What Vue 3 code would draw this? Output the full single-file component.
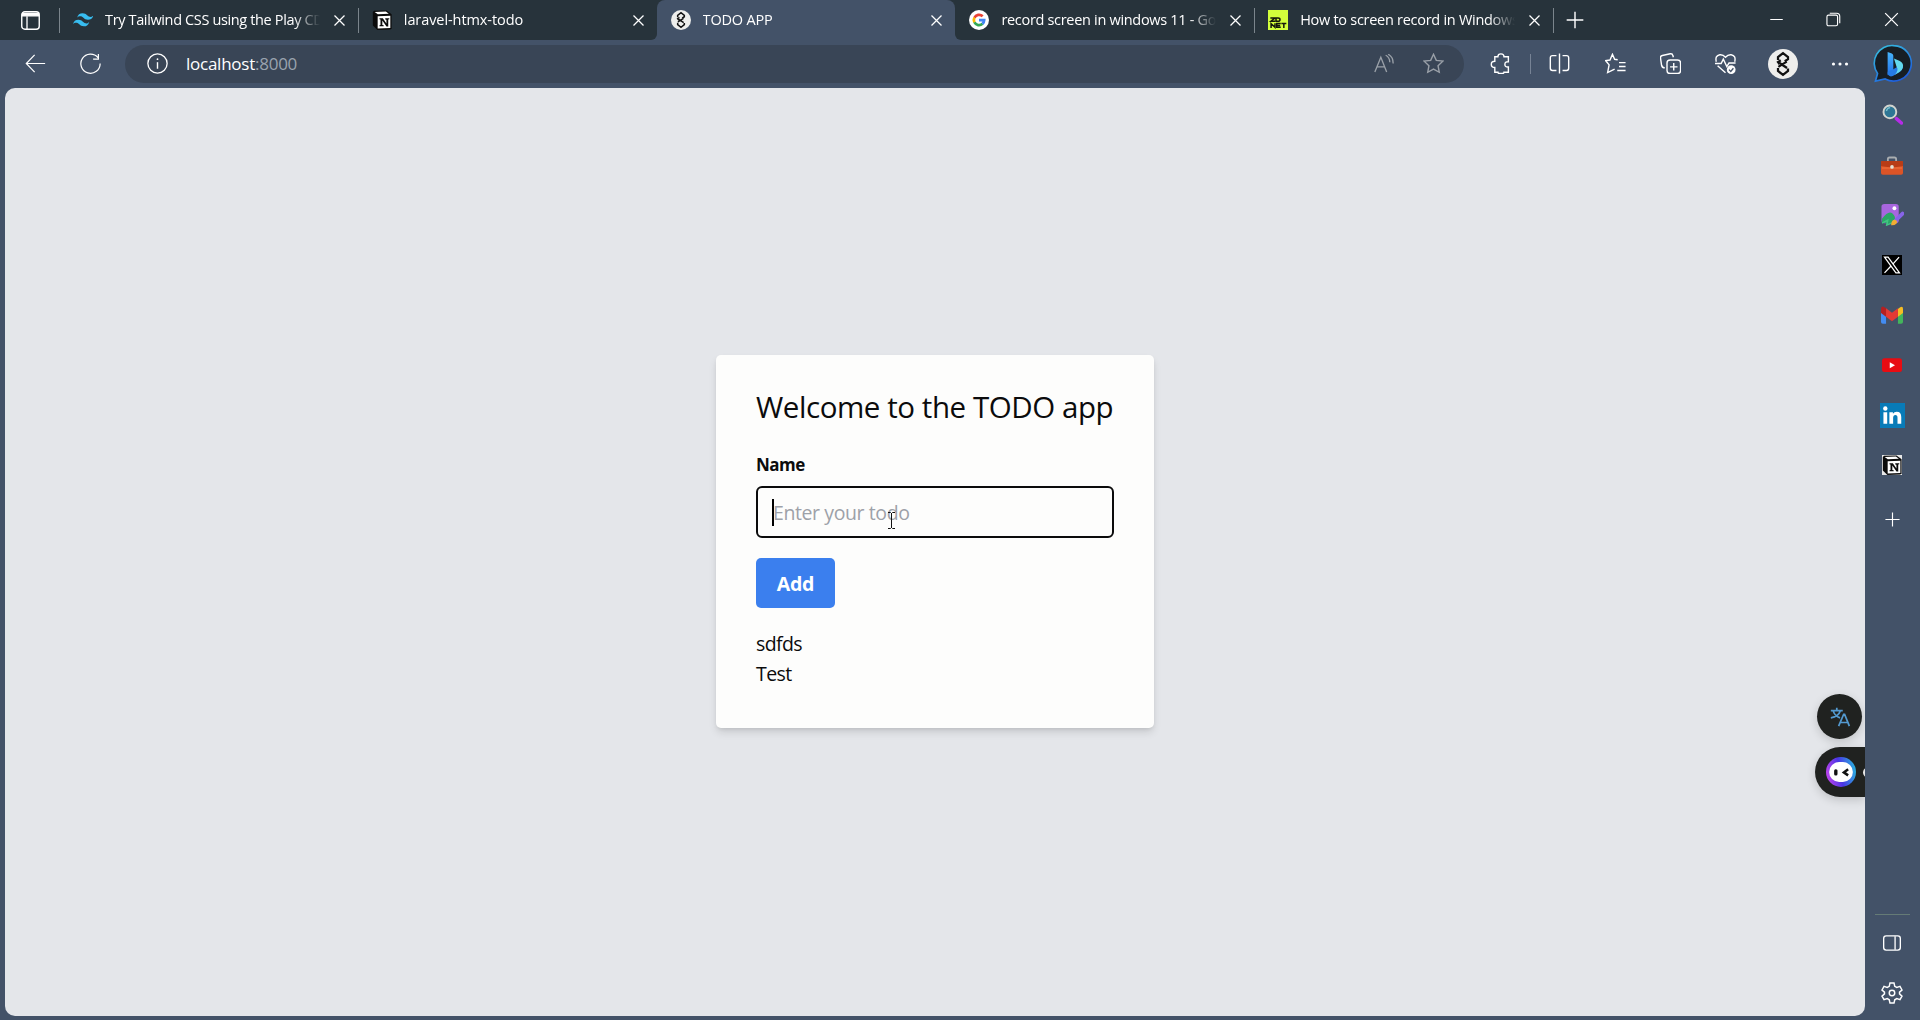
<script setup>
import { h } from 'vue'

const tabs = [
  { icon: 'tailwind', title: 'Try Tailwind CSS using the Play CDN', spacing: -0.36, cls: 'first' },
  { icon: 'notion', title: 'laravel-htmx-todo', spacing: -0.08, cls: 'no-sep' },
  { icon: 'todo', title: 'TODO APP', spacing: -0.2, cls: 'active' },
  { icon: 'google', title: 'record screen in windows 11 - Google', spacing: -0.31, cls: '' },
  { icon: 'zdnet', title: 'How to screen record in Windows 11', spacing: -0.28, cls: '' },
]

const todos = ['sdfds', 'Test']

const art = {
  tailwind: '<path fill="#38bdf0" d="M5 9.2Q6.3 4 11.500 4c5.200 0 5.500 3.800 8.500 4.200 1.900.3 3.300-.3 4.500-2Q23.200 11.800 18 11.800c-5.200 0-5.500-3.800-8.500-4.200C7.600 7.300 6.200 7.900 5 9.200ZM0 17Q1.300 11.800 6.500 11.800c5.200 0 5.500 3.800 8.500 4.200 1.900.3 3.300-.3 4.500-2Q18.200 19.600 13 19.600c-5.200 0-5.500-3.800-8.500-4.200C2.600 15.100 1.200 15.700 0 17Z"/>',
  notion: '<path fill="#0b0b0b" d="M1 2.500 2.500 1 17.500.500 23.500 5v17l-1.500 1.500-15.500.5L1 18.500Z"/><path fill="#fff" d="m3.200 2.500 13.500-.6 3.500 2.500-13.200.7ZM6.800 7.500 22 6.800v14.700l-15.200.7Z"/><path fill="#0b0b0b" d="M9 10h4l4.300 6.200v-4.600l-1.400-.3V9.800h4.800v1.300l-1.200.4v8.300h-2.100l-5-7.200v5.300l1.600.3v1.400H9v-1.300l1.200-.4v-6.500l-1.200-.2Z"/>',
  todo: '<circle cx="12" cy="12" r="12" fill="#eeeeec"/><path fill="none" stroke="#111" stroke-width="1.800" d="M8 8.800V6.400l4-3.100 4 3.100v1.700l-2.600 1.700M10.200 9 8 10.500l1.300 1.700M8.300 14.300l6.700-4.200M9.300 11.200l5.900 4M8 15.200v2.400l4 3.100 4-3.100v-2.100"/>',
  google: '<circle cx="12" cy="12" r="12" fill="#fff"/><g fill="none" stroke-width="3.300"><path stroke="#ea4335" d="M6.500 9.300A6.200 6.200 0 0 1 16.400 7.500"/><path stroke="#fbbc05" d="M6.500 9.200a6.300 6.300 0 0 0 0 5.700"/><path stroke="#34a853" d="M6.500 14.700a6.200 6.200 0 0 0 9.700 1.900"/><path stroke="#4285f4" d="M12 12.100h6.200q0 3-2.100 4.600"/></g>',
  zdnet: '<path fill="#d3ff3b" d="M0 0h24v24H0z"/><path fill="none" stroke="#15180c" stroke-width="1.800" d="M2.800 9.700h5.500L3.500 13.500h5M9.600 9.700h2.500q2.300 0 2.300 1.900t-2.300 1.900H9.600ZM3.700 21.500v-5l4.700 4.300V16M15.300 16.300h-4.800v4.400h4.800m-4.700-2.200h4M16 16.300h6m-3 0v5.200"/>',
  search: '<path stroke="#b62be8" stroke-width="4" stroke-linecap="round" d="m16.500 16.700 5.700 5"/><circle cx="9" cy="9" r="7.300" fill="#2e7695" stroke="#d2d4cf" stroke-width="2.200"/><path stroke="#7bc2d0" stroke-width="1.500" fill="none" d="M5 8q1-3.500 4.300-3.800"/>',
  toolbox: '<path fill="none" stroke="#a9adb0" stroke-width="2" d="M7.500 7V4.500q0-1.800 1.800-1.800h5.400q1.800 0 1.800 1.800V7"/><rect y="6.500" width="24" height="15" rx="2" fill="#dc5427"/><path fill="#b83c16" d="M0 7.500q0-1 1-1h22q1 0 1 1V12l-12 2-12-2Z"/><path stroke="#f47640" d="M1 14.200h22"/><circle cx="12" cy="13" r="2" fill="#e4e1d5"/>',
  image: '<rect x=".5" y="1" width="18" height="20" rx="3" fill="#a866df"/><circle cx="14" cy="5.500" r="2" fill="#fff"/><path fill="#2ba765" d="M1 16.500Q8 7 12 11q4 4 2 7l-4 4-9-2Z"/><path fill="none" stroke="#42c483" stroke-width="1.600" d="m1 21 6-3-1 5 5-2"/><path stroke="#8764e8" stroke-width="4" stroke-linecap="round" d="m15.500 18 7-7"/><path fill="#f2ad33" d="M10.500 23.200q.4-6 4.300-5.700 3.200 1.400 1.200 4.100-2 2-5.500 1.600Z"/>',
  x: '<path fill="#000" d="M0 0h24v24H0z"/><path fill="none" stroke="#fff" stroke-width="1.500" d="M3 2.500h4.300L21 21.500h-4.300ZM20.500 2.500 13 11m-2.500 2.500L3 21.500"/>',
  gmail: '<path fill="#438cf1" d="M0 6h5.500v15.500H2Q0 21.500 0 19.500Z"/><path fill="#43b55b" d="M18.500 6H24v13.500q0 2-2 2h-3.500Z"/><path fill="#f6bd23" d="M18.500 5.500Q24 .5 24 5.500v4.300l-5.500 4Z"/><path fill="#b52021" d="M0 5.500q0-5 5.500-1V14L0 9.800Z"/><path fill="#e43a34" d="m5.500 4.500 6.500 5 6.500-5V14L12 18.700 5.500 14Z"/>',
  youtube: '<rect y="4" width="24" height="16.500" rx="3" fill="#e80c12"/><path fill="#fff" d="m9.300 8.700 6.300 3.500-6.300 3.600Z"/>',
  linkedin: '<path fill="#087bb8" d="M0 0h24v24H0z"/><path fill="#fff" d="M3.300 8.800h3.600v11H3.300ZM9 8.800h3.400v1.500q1.200-1.900 3.600-1.900 4.400 0 4.400 5v6.400h-3.600v-5.700q0-2.600-2-2.600-2.200 0-2.200 2.800v5.500H9Z"/><circle cx="5.100" cy="5.300" r="2.100" fill="#fff"/>',
  bing: '<defs><linearGradient id="rim" x1="0" y1="0" x2=".6" y2="1"><stop stop-color="#38c5e0"/><stop offset="1" stop-color="#1e5fdc"/></linearGradient><linearGradient id="stem" x1="0" y1="0" x2="0" y2="1"><stop stop-color="#46b4fa"/><stop offset="1" stop-color="#2474ea"/></linearGradient></defs><path fill="#171e24" stroke="url(#rim)" stroke-width="1" d="M12.700 1a10.900 10.900 0 1 1-5.200 20.500L1.500 22.800l1.300-4.600A10.900 10.900 0 0 1 12.700 1Z"/><path fill="url(#stem)" d="m9 4.900 2.600 1q.9.400.9 1.400v10.200L9 19.300Z"/><path fill="#267be4" d="m9 17 3.500-1.500 5.500-3.300q1.300 2.800-1.300 4.800l-4.500 2.700Q10 20.500 9 18.500Z"/><path fill="#63d9ed" d="m12.900 8.900 3.600 1.600q2.500 1.400 1.900 3.900-.4 1.700-2.200 2.900l-3 1.800q3-3 1.300-5.100Z"/>',
  bot: '<defs><linearGradient id="ring" x1="0" y1=".7" x2="1" y2=".5"><stop stop-color="#c344ed"/><stop offset=".5" stop-color="#4935e5"/><stop offset="1" stop-color="#2aacdf"/></linearGradient></defs><circle cx="12" cy="12" r="12" fill="url(#ring)"/><rect x="2.500" y="4" width="19" height="16" rx="8" fill="#fff"/><rect x="6.500" y="9.800" width="2.700" height="5" rx="1.200" fill="#111"/><path fill="none" stroke="#111" stroke-width="2" d="m17.700 9.800-3.400 2.500 3.400 2.400"/>',
  translate: '<g fill="none" stroke="#5399cf" stroke-width="1.900"><path d="M2 5h13M8.500 2v3M4.500 5q1.300 5.300 7.500 8M12.500 5Q10.500 11.500 2 13M10.500 22l5.500-13h1l5.200 13M12.500 18h8"/></g>',
}

const line = {
  workspace: '<rect x="2" y="2" width="20" height="20" rx="3.500"/><path d="M2.500 5h19M8 7v15" stroke-width="1.500"/><path fill="currentColor" d="M3 3.800h18v2.900H3z"/>',
  close: '<path d="m4 4 16 16M20 4 4 20"/>',
  plus: '<path d="M12 2v20M2 12h20"/>',
  minimize: '<path d="M2 12h20"/>',
  restore: '<rect x="1.500" y="5" width="17" height="17" rx="2.500"/><path d="M6 2h11q5 0 5 5v11"/>',
  back: '<path d="M23 12H1.500M11 2.200 1.500 12l9.500 9.800"/>',
  refresh: '<path d="M20.500 5.200A11 11 0 1 0 23 12M21 1v6h-6"/>',
  info: '<circle cx="12" cy="12" r="11"/><path d="M12 10.500V18" stroke-width="1.600"/><circle cx="12" cy="7" r="1" fill="currentColor" stroke="none"/>',
  read: '<path d="M1 21.500 8.200 4l7 17.500M3.500 15.500h9.400M14 1.500q4.800 2.200 5 8.500M17 .3q6 3 6 11"/>',
  star: '<path d="m12 1.500 3.200 6.900 7.500.9-5.500 5.200 1.400 7.500L12 18.400 5.400 22l1.400-7.500L1.300 9.300l7.500-.9Z"/>',
  puzzle: '<path d="M5.500 4.300H9Q9 1 12.500 1T16 4.300h5V10q-4-.3-4 3t4 3v6h-5q.2 1.500-3.500 1.500T9 22H5.500v-5.500Q1.500 16.500 1.500 13t4-3.500Z"/>',
  split: '<path d="M8.500 3H4Q1.500 3 1.500 5.500v12Q1.500 20 4 20h4.500M15.500 3H20q2.500 0 2.500 2.500v12Q22.500 20 20 20h-4.500M12 .5v23"/>',
  favorites: '<path d="M14.500 7.700 11 7.200 8.500 1.500 5.700 8l-5 .6 4 5-1.700 8.700 8-4M16 11h7.500M16 15.500h7.500M14 20h9.500"/>',
  collections: '<rect x="8" y="8" width="15.500" height="15.500" rx="3.500"/><path d="M15.700 11.500v8.500M11.500 15.800H20M5.500 17Q2.500 17 1.800 14L.6 5.700Q.3 3.300 2.700 2.800l9-1.900q2.500-.5 3 2l.6 2"/>',
  heart: '<path d="M1.500 10Q-.3 3 5.500 2 9 1.500 12 4.800 15 1.500 18.500 2q5.800 1 4 8M0 12h7l2.500-5 4 8.500 2.500-4h7.500M3 14.500l9 8"/><circle cx="18.500" cy="19" r="5" fill="currentColor" stroke="none"/><path stroke="#435268" d="m16 19 2 2 3-3.500"/>',
  dots: '<g fill="currentColor" stroke="none"><circle cx="3.300" cy="12" r="2.100"/><circle cx="12" cy="12" r="2.100"/><circle cx="20.700" cy="12" r="2.100"/></g>',
  panel: '<rect x="2" y="3.500" width="20" height="17" rx="3"/><path d="M15.700 4v16"/>',
  gear: '<path d="M9.800 1h4.400l.8 3.700 2.200 1.200 3.500-1.100 2.200 3.900L20.200 11v2l2.700 2.400-2.200 3.900-3.500-1.200-2.200 1.300-.8 3.600H9.800L9 19.400l-2.200-1.300-3.500 1.200-2.200-3.900L3.800 13v-2L1.100 8.700l2.200-3.900 3.500 1.100L9 4.700Z"/><circle cx="12" cy="12" r="3"/>',
}

const Icon = ({ name, size = 20, stroke = 1.6 }) =>
  h('svg', {
    viewBox: '0 0 24 24',
    width: size,
    height: size,
    fill: 'none',
    ...(line[name] ? { stroke: 'currentColor', 'stroke-width': stroke } : {}),
    innerHTML: art[name] || line[name],
  })
Icon.props = ['name', 'size', 'stroke']
</script>

<template>
  <div class="browser">
    <header class="strip">
      <span class="workspace"><Icon name="workspace" :size="21" /></span>
      <div v-for="t in tabs" :key="t.title" class="tab" :class="t.cls">
        <Icon :name="t.icon" :size="20" />
        <span class="tab-title" :style="{ letterSpacing: t.spacing + 'px' }">{{ t.title }}</span>
        <Icon class="tab-close" name="close" :size="15" :stroke="2" />
      </div>
      <span class="new-tab"><Icon name="plus" :size="20" :stroke="1.7" /></span>
      <span class="spacer"></span>
      <div class="controls">
        <span><Icon name="minimize" :size="15" /></span>
        <span><Icon name="restore" :size="15" :stroke="1.8" /></span>
        <span><Icon name="close" :size="19" /></span>
      </div>
    </header>

    <nav class="toolbar">
      <span class="slot back"><Icon name="back" :size="21" :stroke="1.4" /></span>
      <span class="slot refresh"><Icon name="refresh" :size="21" :stroke="1.4" /></span>
      <div class="address">
        <Icon name="info" :size="21" :stroke="1.5" />
        <span class="url">localhost<i>:8000</i></span>
        <span class="dim read"><Icon name="read" :size="20" /></span>
        <span class="dim"><Icon name="star" :size="21" /></span>
      </div>
      <span class="slot puzzle"><Icon name="puzzle" :size="21" /></span>
      <span class="divider"></span>
      <span class="slot split"><Icon name="split" :size="21" /></span>
      <span class="slot"><Icon name="favorites" :size="21" /></span>
      <span class="slot"><Icon name="collections" :size="21" /></span>
      <span class="slot"><Icon name="heart" :size="21" /></span>
      <span class="slot profile"><Icon name="todo" :size="30" /></span>
      <span class="slot dots"><Icon name="dots" :size="18" /></span>
      <span class="slot bing"><Icon name="bing" :size="39" /></span>
    </nav>

    <div class="body">
      <main class="page">
        <section class="card">
          <h1>Welcome to the TODO app</h1>
          <label>Name</label>
          <div class="field">
            <span class="caret"></span><span class="hint">Enter your todo</span>
            <svg class="pointer" width="9" height="17" viewBox="0 0 9 17"><path d="M1 .5h2.500l1 1 1-1H8M4.500 1v15M1 16.500h2.500l1-1 1 1H8" fill="none" stroke="#111" /></svg>
          </div>
          <button>Add</button>
          <ul>
            <li v-for="t in todos" :key="t">{{ t }}</li>
          </ul>
        </section>
        <div class="floating">
          <span class="translate"><Icon name="translate" :size="22" /></span>
          <span class="assistant"><Icon name="bot" :size="30" /><b></b></span>
        </div>
      </main>
      <aside class="side">
        <span><Icon name="search" :size="21" /></span>
        <span class="low"><Icon name="toolbox" :size="22" /></span>
        <span><Icon name="image" :size="23" /></span>
        <span><Icon name="x" :size="20" /></span>
        <span><Icon name="gmail" :size="22" /></span>
        <span><Icon name="youtube" :size="20" /></span>
        <span><Icon name="linkedin" :size="25" /></span>
        <span><em><Icon name="notion" :size="20" /></em></span>
        <span class="add"><Icon name="plus" :size="17" /></span>
        <div class="side-foot">
          <span><Icon name="panel" :size="20" /></span>
          <span><Icon name="gear" :size="22" /></span>
        </div>
      </aside>
    </div>
  </div>
</template>

<style>
body { margin: 0; overflow: hidden; }
</style>

<style scoped>
* { box-sizing: border-box; }
svg { display: block; flex: none; }
.browser {
  width: 1920px; height: 1020px; overflow: hidden;
  display: flex; flex-direction: column;
  background: #435268; color: #fff;
  font-family: "Open Sans", "Noto Sans", sans-serif;
}
.strip { display: flex; height: 40px; background: #435268; flex: none; }
.workspace { width: 59px; background: #27333b; display: flex; align-items: center; justify-content: center; }
.workspace svg { margin-left: 2px; }
.tab {
  width: 298.800px; display: flex; align-items: center; padding: 0 11px 0 14px;
  background: linear-gradient(#7b858c, #7b858c) 0 8px / 1px 25px no-repeat #27333b;
}
.tab-close { margin-top: 1px; }
.tab.no-sep { border-radius: 0 0 6px 0; }
.tab.active { background: #435268; border-radius: 8px 8px 0 0; box-shadow: 0 -8px 0 #27333b; }
.tab.active + .tab { border-radius: 0 0 0 6px; background: #27333b; }
.tab-title {
  flex: 1; min-width: 0; margin: 0 10px 0 12px; overflow: hidden; white-space: nowrap;
  font-size: 14.500px; line-height: 40px; height: 40px;
  -webkit-mask-image: linear-gradient(90deg, #000 calc(100% - 28px), transparent calc(100% - 2px));
  mask-image: linear-gradient(90deg, #000 calc(100% - 28px), transparent calc(100% - 2px));
}
.new-tab { width: 44px; display: flex; align-items: center; justify-content: center; padding-bottom: 1px; background: linear-gradient(#7b858c, #7b858c) 0 8px / 1px 25px no-repeat #27333b; }
.spacer { flex: 1; background: #27333b; }
.controls { display: flex; background: #27333b; padding-bottom: 1px; }
.controls span { width: 57.500px; display: flex; align-items: center; justify-content: center; }

.toolbar { display: flex; align-items: center; height: 48px; flex: none; padding-bottom: 1px; }
.slot { width: 55px; flex: none; display: flex; justify-content: center; }
.back { width: 70px; }
.refresh { width: 40px; }
.address {
  margin-left: 15px; width: 1339px; height: 38px; border-radius: 19px; background: #394556;
  display: flex; align-items: center; padding: 0 20px 0 22px;
}
.url { flex: 1; margin-left: 18px; font-size: 17px; line-height: 36px; letter-spacing: -0.25px; }
.url i { font-style: normal; color: #9aa3ae; }
.dim { color: #9aa0a8; }
.read { margin-right: 29px; }
.puzzle { width: 72px; }
.divider { width: 1px; height: 20px; margin-left: -6px; background: #778395; }
.split { width: 57px; }
.profile { width: 60px; }
.dots { width: 54px; }
.bing { width: 51px; }

.body { flex: 1; display: flex; min-height: 0; padding: 0 0 4px 5px; }
.page {
  position: relative; width: 1860px; border-radius: 10px; overflow: hidden;
  background: #e4e6ea; color: #0b0b0c;
  display: flex; align-items: center; justify-content: center;
}
.card {
  width: 438px; height: 373px; margin-top: -21px; padding: 30px 40px; background: #fdfdfc; border-radius: 5px;
  box-shadow: 0 5px 8px -1px rgba(0, 0, 0, .12), 0 2px 5px -2px rgba(0, 0, 0, .12);
}
h1 { margin: 0; font-size: 29.500px; font-weight: 400; line-height: 43px; white-space: nowrap; letter-spacing: -0.43px; }
label { display: block; margin-top: 24px; font-size: 17px; font-weight: 700; line-height: 25px; letter-spacing: -0.5px; }
.field {
  position: relative; height: 52px; margin-top: 9px; border: 2px solid #0b0b0c; border-radius: 6px;
  display: flex; align-items: center; padding-left: 14px;
}
.caret { width: 2px; height: 27px; background: #000; }
.hint { margin-left: -1px; font-size: 19.500px; color: #9da1a8; letter-spacing: -0.4px; white-space: nowrap; padding-top: 1px; }
.pointer { position: absolute; left: 129px; top: 24px; }
button {
  display: block; margin-top: 20px; width: 79px; height: 50px; border: 0; border-radius: 5px;
  background: #3b7fee; color: #fff; font: 700 19.500px "Open Sans", sans-serif; letter-spacing: -0.2px; padding: 1px 0 0;
}
ul { list-style: none; margin: 21px 0 0; padding: 0; font-size: 19.500px; line-height: 30px; letter-spacing: -0.6px; }

.floating { position: absolute; right: 0; top: 606px; display: flex; flex-direction: column; align-items: flex-end; gap: 8px; }
.translate, .assistant { background: #202220; display: flex; align-items: center; box-shadow: 0 3px 10px rgba(0, 0, 0, .16); }
.translate { width: 45px; height: 45px; border-radius: 50%; justify-content: center; margin-right: 3px; }
.assistant { width: 50px; height: 50px; border-radius: 25px 0 0 25px; padding-left: 11px; overflow: hidden; }
.assistant b { flex: none; width: 8px; height: 9px; border-radius: 50%; background: #e5e5e5; margin-left: 7px; }

.side { width: 55px; display: flex; flex-direction: column; align-items: center; padding-top: 1px; }
.side span { width: 55px; height: 50.200px; display: flex; align-items: center; justify-content: center; flex: none; padding-right: 1px; }
.side .low { padding-top: 4px; }
.side em { background: #e8e8e8; }
.side .add { margin-top: 4px; }
.side-foot { margin-top: auto; border-top: 1px solid #657b76; width: 35px; height: 102px; padding-top: 3px; display: flex; flex-direction: column; align-items: center; }
</style>
